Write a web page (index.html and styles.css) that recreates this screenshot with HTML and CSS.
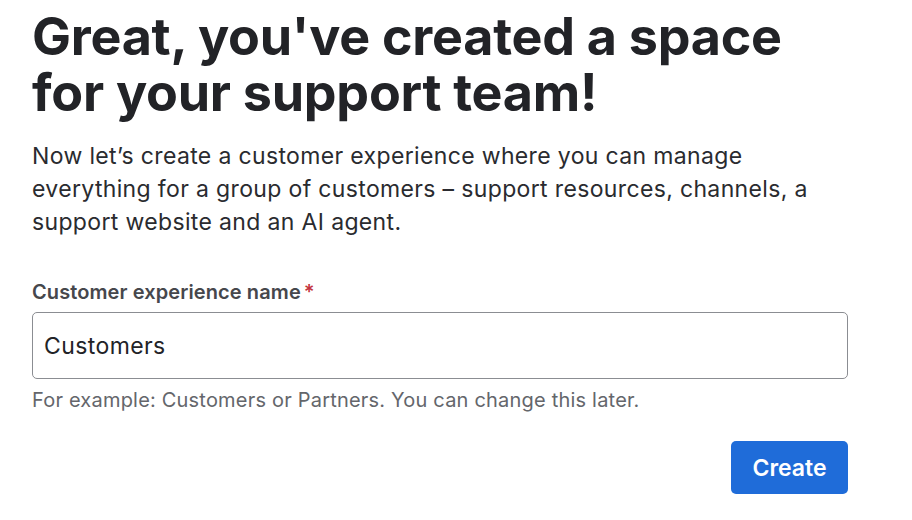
FILE: index.html
```html
<!DOCTYPE html>
<html lang="en">
<head>
<meta charset="utf-8">
<link rel="stylesheet" href="styles.css">
</head>
<body>
<main class="page">
  <h1 class="title">Great, you've created a space for your support team!</h1>
  <p class="intro">Now let’s create a customer experience where you can manage everything for a group of customers – support resources, channels, a support website and an AI agent.</p>
  <form class="form">
    <label class="label" for="cx-name">Customer experience name<span class="req">*</span></label>
    <input class="input" id="cx-name" type="text" value="Customers">
    <p class="hint">For example: Customers or Partners. You can change this later.</p>
    <div class="actions">
      <button class="btn" type="button">Create</button>
    </div>
  </form>
</main>
</body>
</html>
```
FILE: styles.css
```css
* { box-sizing: border-box; }
html, body { margin: 0; background: #fff; }
body {
  font-family: Inter, "Noto Sans", "Liberation Sans", sans-serif;
  color: #2a2b2f;
}
.page {
  width: 848px;
  padding: 9px 0 0 32px;
}
.title {
  margin: 0;
  font-size: 52px;
  line-height: 56px;
  font-weight: 700;
  letter-spacing: -0.25px;
  color: #222327;
  width: 816px;
}
.intro {
  margin: 19px 0 0;
  font-size: 23px;
  line-height: 33px;
  letter-spacing: 0.35px;
  width: 830px;
  color: #2a2b2f;
}
.form {
  margin-top: 39px;
  display: flex;
  flex-direction: column;
}
.label {
  font-size: 20px;
  line-height: 28px;
  font-weight: 600;
  letter-spacing: 0.1px;
  color: #46474c;
}
.req { color: #c4333d; margin-left: 3px; }
.input {
  margin-top: 6px;
  height: 67px;
  width: 816px;
  border: 1.5px solid #8b8d92;
  border-radius: 5px;
  padding: 0 11px;
  font-family: inherit;
  font-size: 23px;
  letter-spacing: 0.4px;
  color: #222327;
  background: #fff;
}
.hint {
  margin: 7px 0 0;
  font-size: 20px;
  line-height: 28px;
  letter-spacing: 0.2px;
  color: #64666b;
}
.actions {
  display: flex;
  justify-content: flex-end;
  margin-top: 27px;
}
.btn {
  height: 53px;
  width: 117px;
  padding: 0;
  border: none;
  border-radius: 5px;
  background: #1f6cd9;
  color: #fff;
  font-family: inherit;
  font-size: 23px;
  font-weight: 600;
}
```
